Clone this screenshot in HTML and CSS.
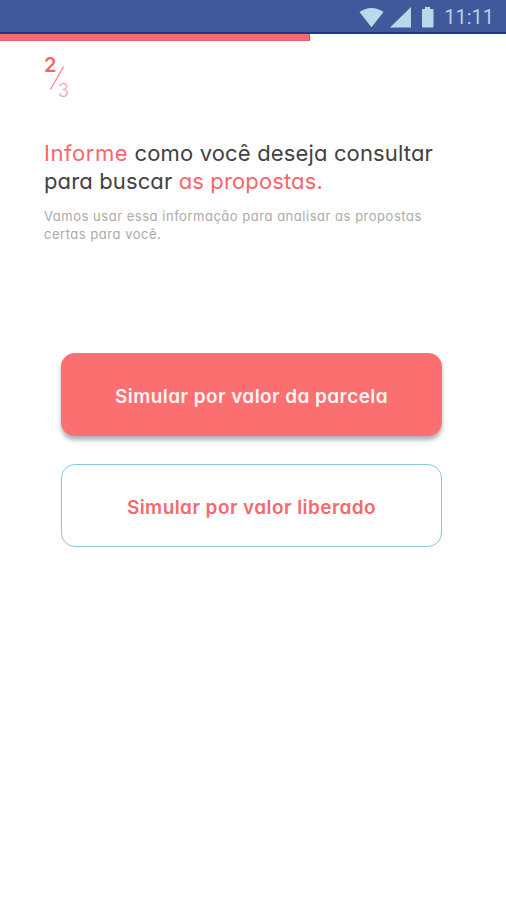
FILE: index.html
```html
<!DOCTYPE html>
<html lang="pt-BR">
<head>
<meta charset="utf-8">
<meta name="viewport" content="width=device-width, initial-scale=1">
<title>Simular proposta</title>
<link rel="stylesheet" href="styles.css">
</head>
<body>
<header class="status-bar">
  <svg class="status-icons" viewBox="0 0 78 24" aria-hidden="true">
    <path d="M.5 8Q12.500 0 24.500 8L13 22.700Q12.500 23.200 12 22.700Z"/>
    <path d="M31 23.500 52 3V23.500Z"/>
    <path d="M66 3h5v2h2.500q1 0 1 1v16.500q0 1-1 1H64q-1 0-1-1V6q0-1 1-1h2Z"/>
  </svg>
  <span class="clock">11:11</span>
</header>
<div class="progress"><div class="progress-fill"></div></div>
<main class="content">
  <div class="step">
    <span class="step-current">2</span>
    <svg class="step-slash" viewBox="0 0 14 24" aria-hidden="true"><path d="M13.500 .5 .5 23.500"/></svg>
    <span class="step-total">3</span>
  </div>
  <h1 class="title">
    <span class="title-line first"><em>Informe</em> como você deseja consultar</span>
    <span class="title-line second">para buscar <em>as propostas.</em></span>
  </h1>
  <p class="subtitle">Vamos usar essa informação para analisar as propostas<br>certas para você.</p>
  <div class="actions">
    <button class="button primary">Simular por valor da parcela</button>
    <button class="button outline">Simular por valor liberado</button>
  </div>
</main>
</body>
</html>
```

FILE: styles.css
```css
* { box-sizing: border-box; }

body {
  margin: 0;
  min-height: 900px;
  background: #fff;
  font-family: Inter, "Open Sans", sans-serif;
  font-feature-settings: "cv11" 1;
}

.status-bar {
  display: flex;
  justify-content: flex-end;
  height: 34px;
  padding-right: 12px;
  background: #40599a;
  border-bottom: 2px solid #173b86;
}

.status-icons {
  width: 78px;
  height: 24px;
  margin: 4px 7px 0 0;
  fill: #b7d9ea;
}

.clock {
  color: #b7d0ea;
  font: 400 20px/35px Roboto, sans-serif;
}

.progress { height: 7px; }

.progress-fill {
  width: 310px;
  height: 7px;
  background: #fa6b6f;
  border-bottom: 1px solid #e0646c;
  border-right: 1px solid #b8506a;
}

.content { padding: 14px 44px 0; }

.step {
  display: grid;
  grid-template-columns: 12px 5px 9px;
  height: 46px;
  color: #f5656b;
}

.step-current { font-size: 20px; font-weight: 600; line-height: 20px; }

.step-slash {
  width: 14px;
  height: 24px;
  margin: 11px 0 0 -6px;
  fill: none;
  stroke: #f38d96;
  stroke-width: 1.300;
}

.step-total {
  margin-top: 25px;
  color: #f5a0aa;
  font-size: 18px;
  font-weight: 300;
  line-height: 22px;
  margin-left: -3px;
}

.title {
  margin: 38px 0 0;
  color: #424242;
  font-size: 22px;
  font-weight: 400;
  line-height: 28px;
}

.title-line { display: block; white-space: nowrap; }
.first { letter-spacing: .15px; }
.first em { letter-spacing: .55px; }
.second { letter-spacing: .13px; }
.title em { color: #fa666b; font-style: normal; }

.subtitle {
  margin: 12px 0 0;
  color: #aaa;
  font-size: 13px;
  letter-spacing: .52px;
  line-height: 18px;
  white-space: nowrap;
}

.actions {
  display: grid;
  gap: 28px;
  margin: 110px 20px 0 17px;
}

.button {
  height: 83px;
  padding: 3px 0 0;
  border: 0;
  border-radius: 14px;
  font: inherit;
  font-size: 19px;
  font-weight: 600;
  letter-spacing: .43px;
  white-space: nowrap;
}

.primary {
  background: #fc6f71;
  color: #fff3f1;
  box-shadow: 0 4px 4px rgba(60, 60, 70, .4);
}

.outline {
  background: #fff;
  border: 1.500px solid #8bc7de;
  color: #f5696e;
}
```
